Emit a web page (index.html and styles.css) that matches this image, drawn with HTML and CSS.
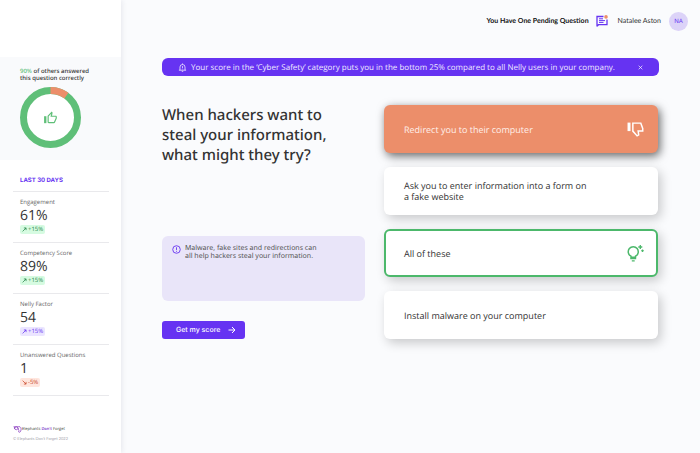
FILE: index.html
```html
<!DOCTYPE html>
<html lang="en">
<head>
  <meta charset="UTF-8">
  <meta name="viewport" content="width=device-width, initial-scale=1.0">
  <title>Nelly - Elephants Don't Forget</title>
  <link rel="stylesheet" href="styles.css">
</head>
<body>
  <aside class="sidebar">
    <section class="answered">
      <p><span class="percent">90%</span> of others answered<br>this question correctly</p>
      <svg class="donut" viewBox="0 0 61 61" aria-hidden="true">
        <circle cx="30.5" cy="30.5" r="27" fill="#fff" stroke="#5fbf78" stroke-width="7"/>
        <circle cx="30.5" cy="30.5" r="27" fill="none" stroke="#ec8e6a" stroke-width="7" pathLength="100" stroke-dasharray="10 90" transform="rotate(-90 30.5 30.5)"/>
        <g transform="translate(23.5 24) scale(.58)" fill="#5fbf78">
          <path d="M1 9h4v12H1z"/>
          <path d="M9 21h9c.83 0 1.54-.5 1.84-1.22l3.02-7.05c.09-.23.14-.47.14-.73v-2c0-1.100-.9-2-2-2h-6.310l.95-4.570.03-.32c0-.41-.17-.79-.44-1.060L14.170 1 7.580 7.590C7.220 7.950 7 8.450 7 9v10c0 1.100.9 2 2 2zM9 9l4.340-4.340L12 10h9v2l-3 7H9V9z"/>
        </g>
      </svg>
    </section>

    <section class="stats">
      <h2>LAST 30 DAYS</h2>
      <div class="stat">
        <h3>Engagement</h3>
        <div class="value">61%</div>
        <span class="badge up"><svg viewBox="0 0 8 8"><path d="M1 7 6.500 1.500M3 1.500h3.500V5"/></svg>+15%</span>
      </div>
      <div class="stat">
        <h3>Competency Score</h3>
        <div class="value">89%</div>
        <span class="badge up"><svg viewBox="0 0 8 8"><path d="M1 7 6.500 1.500M3 1.500h3.500V5"/></svg>+15%</span>
      </div>
      <div class="stat">
        <h3>Nelly Factor</h3>
        <div class="value">54</div>
        <span class="badge nelly"><svg viewBox="0 0 8 8"><path d="M1 7 6.500 1.500M3 1.500h3.500V5"/></svg>+15%</span>
      </div>
      <div class="stat">
        <h3>Unanswered Questions</h3>
        <div class="value">1</div>
        <span class="badge down"><svg viewBox="0 0 8 8"><path d="M1 1 6.500 6.500M3 6.500h3.500V3"/></svg>-5%</span>
      </div>
    </section>

    <footer class="brand">
      <div class="logo">
        <svg viewBox="0 0 18 16" aria-hidden="true">
          <path d="M1 2.500h13c2 1.500 2.500 4 2 6.500-.5 3-2 5.200-4 4.500-1.500-.6-1-2.500.5-2.500M3 3v4M9 4c2 1 2.500 3 1.500 5l2 1"/>
          <circle cx="6.500" cy="5.500" r="3"/>
        </svg>
        <span>Elephants <b>Don't</b> Forget</span>
      </div>
      <small>© Elephants Don't Forget 2022</small>
    </footer>
  </aside>

  <div class="page">
    <header class="topbar">
      <a class="pending" href="#">You Have One Pending Question
        <svg viewBox="0 0 12 12" aria-hidden="true">
          <path d="M1 11.500V1.500h6.500M11 4.500v5.200H2.500L1 11.200" fill="none" stroke="#6633f2" stroke-width="1.300"/>
          <path d="M3 3.800h4M3 5.600h6M3 7.400h4.500" fill="none" stroke="#6633f2"/>
          <circle cx="10" cy="1.900" r="1.800" fill="#ec8e6a"/>
        </svg>
      </a>
      <span class="user">Natalee Aston</span>
      <span class="avatar">NA</span>
    </header>

    <main>
      <div class="banner" role="status">
        <svg viewBox="0 0 10 10" aria-hidden="true">
          <path d="M1 8h8M2.200 8V4.500a2.800 2.800 0 0 1 5.600 0V8M5 .5v1.200M5 3.500v2M5 6.300v.7M4.200 9.300h1.600"/>
        </svg>
        <p>Your score in the ‘Cyber Safety’ category puts you in the bottom 25% compared to all Nelly users in your company.</p>
        <button class="close" type="button" aria-label="Close">
          <svg viewBox="0 0 6 6"><path d="M.8.8l4.400 4.400M5.200.8.8 5.200"/></svg>
        </button>
      </div>

      <div class="quiz">
        <div class="question">
          <h1>When hackers want to steal your information, what might they try?</h1>
          <div class="hint">
            <svg viewBox="0 0 10 10" aria-hidden="true">
              <circle cx="5" cy="5" r="4.200"/>
              <path d="M5 2.500v3M5 6.500v1"/>
            </svg>
            <p>Malware, fake sites and redirections can all help hackers steal your information.</p>
          </div>
          <button class="score" type="button">Get my score
            <svg viewBox="0 0 8 8" aria-hidden="true"><path d="M.5 4h6.500M4 1l3 3-3 3"/></svg>
          </button>
        </div>

        <div class="answers">
          <button class="answer wrong" type="button">
            <span>Redirect you to their computer</span>
            <svg viewBox="0 0 16 16" aria-hidden="true">
              <path d="M.5 1.500h2.800v8H.5z" fill="#fff"/>
              <path d="M5.500 2H13l1.800 5v2.500h-4.300l.5 3.500-1.500 1-4-4.500z" fill="none" stroke="#fff" stroke-width="1.400"/>
            </svg>
          </button>
          <button class="answer" type="button">
            <span>Ask you to enter information into a form on a fake website</span>
          </button>
          <button class="answer right" type="button">
            <span>All of these</span>
            <svg viewBox="0 0 17 17" aria-hidden="true">
              <path d="M4 11.200a5 5 0 1 1 4.500 0v1h-4.500z" fill="none" stroke="#4cb86b" stroke-width="1.500"/>
              <path d="M3.200 13.700h6M4.800 15.900h2.900M13.300 0v4M11.300 2h4M15.500 4.500v2.400M14.300 5.700h2.400" fill="none" stroke="#4cb86b" stroke-width="1.300"/>
            </svg>
          </button>
          <button class="answer" type="button">
            <span>Install malware on your computer</span>
          </button>
        </div>
      </div>
    </main>
  </div>
</body>
</html>
```
FILE: styles.css
```css
* {
  box-sizing: border-box;
}
body {
  display: flex;
  min-height: 100vh;
  margin: 0;
  background: #fafbfd;
  color: #333;
  font-family: "Open Sans", "Noto Sans", sans-serif;
  font-size: 9px;
  text-rendering: geometricPrecision;
}
h1, h2, h3, p {
  margin: 0;
  font-weight: 400;
}
button {
  border: 0;
  font: inherit;
  text-rendering: inherit;
  cursor: pointer;
}
svg {
  flex: none;
}

/* sidebar */
.sidebar {
  display: flex;
  flex: none;
  flex-direction: column;
  width: 121px;
  padding-top: 57px;
  background: #fff;
  box-shadow: 1px 0 5px rgba(60, 60, 100, 0.1);
}
.answered {
  padding: 11px 20px 12px;
  background: #f9fafc;
  font-family: "Noto Sans", sans-serif;
  font-size: 6px;
  line-height: 7px;
  white-space: nowrap;
}
.answered p {
  font-weight: 500;
}
.percent {
  color: #5fbf78;
}
.donut {
  display: block;
  width: 61px;
  height: 61px;
  margin-top: 5px;
}
.stats {
  padding: 16px 12px 0 13px;
}
.stats h2 {
  padding: 0 7px 5px;
  border-bottom: 1px solid #e9e9ec;
  color: #6633f2;
  font: 700 6px/10px Inter, sans-serif;
}
.stat {
  height: 51px;
  padding: 6px 7px 0;
  border-bottom: 1px solid #e9e9ec;
}
.stat h3 {
  color: #666;
  font-size: 6px;
  line-height: 8px;
}
.value {
  font-size: 14px;
  line-height: 19px;
}
.badge {
  display: inline-flex;
  align-items: center;
  gap: 1px;
  height: 9px;
  padding: 0 2px;
  border-radius: 2px;
  font-size: 6px;
  line-height: 9px;
  vertical-align: top;
}
.badge svg {
  width: 5px;
  height: 5px;
  fill: none;
  stroke: currentColor;
  stroke-width: 1.2;
}
.up {
  background: #d6fbe1;
  color: #27844a;
}
.nelly {
  background: #ebe5ff;
  color: #6633f2;
}
.down {
  background: #ffe6de;
  color: #c9482a;
}
.brand {
  margin-top: auto;
  padding: 0 12px 10px 13px;
}
.logo {
  display: flex;
  align-items: center;
  font-size: 4px;
  line-height: 9px;
}
.logo svg {
  width: 9px;
  height: 9px;
  fill: none;
  stroke: #8b3fc0;
  stroke-width: 1.5;
}
.logo b {
  color: #7a36c8;
  font-weight: 600;
}
.brand small {
  display: block;
  color: #a4a4ad;
  font: 4px/9px Lato, sans-serif;
}

/* main area */
.page {
  flex: 1;
  min-width: 0;
}
.topbar {
  display: flex;
  align-items: center;
  justify-content: flex-end;
  height: 42px;
  padding-right: 12px;
  color: #333;
  font: 7px/10px Lato, sans-serif;
}
.pending {
  display: flex;
  align-items: center;
  gap: 7px;
  color: #111;
  font-weight: 700;
  text-decoration: none;
}
.pending svg {
  width: 12px;
  height: 12px;
}
.user {
  margin: 0 8px 0 10px;
}
.avatar {
  width: 19px;
  height: 19px;
  border-radius: 50%;
  background: #dcd3f8;
  color: #6633f2;
  font-family: Inter, sans-serif;
  font-size: 6px;
  line-height: 19px;
  text-align: center;
}
main {
  padding: 16px 41px;
}
.banner {
  display: flex;
  align-items: center;
  height: 18px;
  padding: 0 16px;
  border-radius: 6px;
  background: #6633f2;
  color: #efeaff;
  font-size: 8px;
}
.banner svg {
  width: 9px;
  height: 9px;
  fill: none;
  stroke: #fff;
  stroke-width: 0.8;
}
.banner p {
  flex: 1;
  margin-left: 4px;
  white-space: nowrap;
}
.banner .close {
  display: flex;
  padding: 0;
  background: none;
}
.banner .close svg {
  width: 5px;
  height: 5px;
}
.quiz {
  display: grid;
  grid-template-columns: 203fr 274fr;
  gap: 19px;
  margin-top: 29px;
  padding-right: 1px;
}
.question {
  display: flex;
  flex-direction: column;
  align-items: flex-start;
  font-family: "Noto Sans", sans-serif;
}
h1 {
  max-width: 180px;
  font-size: 15px;
  font-weight: 500;
  line-height: 20px;
}
.hint {
  display: flex;
  gap: 4px;
  width: 100%;
  height: 65px;
  margin-top: auto;
  padding: 9px 10px;
  border-radius: 6px;
  background: #e9e5f9;
  color: #555;
  font-size: 7px;
  line-height: 8px;
}
.hint svg {
  width: 9px;
  height: 9px;
  fill: none;
  stroke: #6633f2;
}
.hint p {
  max-width: 136px;
}
.score {
  display: flex;
  align-items: center;
  justify-content: space-between;
  width: 83px;
  height: 18px;
  margin-top: 20px;
  padding: 0 9px 0 14px;
  border-radius: 3px;
  background: #6633f2;
  color: #fff;
  font: 500 7px/10px Inter, sans-serif;
}
.score svg {
  width: 8px;
  height: 8px;
  fill: none;
  stroke: #fff;
}
.answers {
  display: grid;
  gap: 14px;
}
.answer {
  display: flex;
  align-items: center;
  justify-content: space-between;
  height: 48px;
  padding: 0 14px 0 20px;
  border-radius: 6px;
  background: #fff;
  box-shadow: 3px 4px 11px rgba(0, 0, 0, 0.2);
  color: #333;
  font-size: 9px;
  line-height: 11px;
  text-align: left;
}
.answer span {
  max-width: 184px;
}
.answer svg {
  width: 17px;
  height: 17px;
}
.wrong {
  background: #ec8e6a;
  box-shadow: 2px 3px 10px rgba(0, 0, 0, 0.6);
  color: #fff0ea;
}
.right {
  padding: 0 12px 0 18px;
  border: 2px solid #4cb86b;
}
```
